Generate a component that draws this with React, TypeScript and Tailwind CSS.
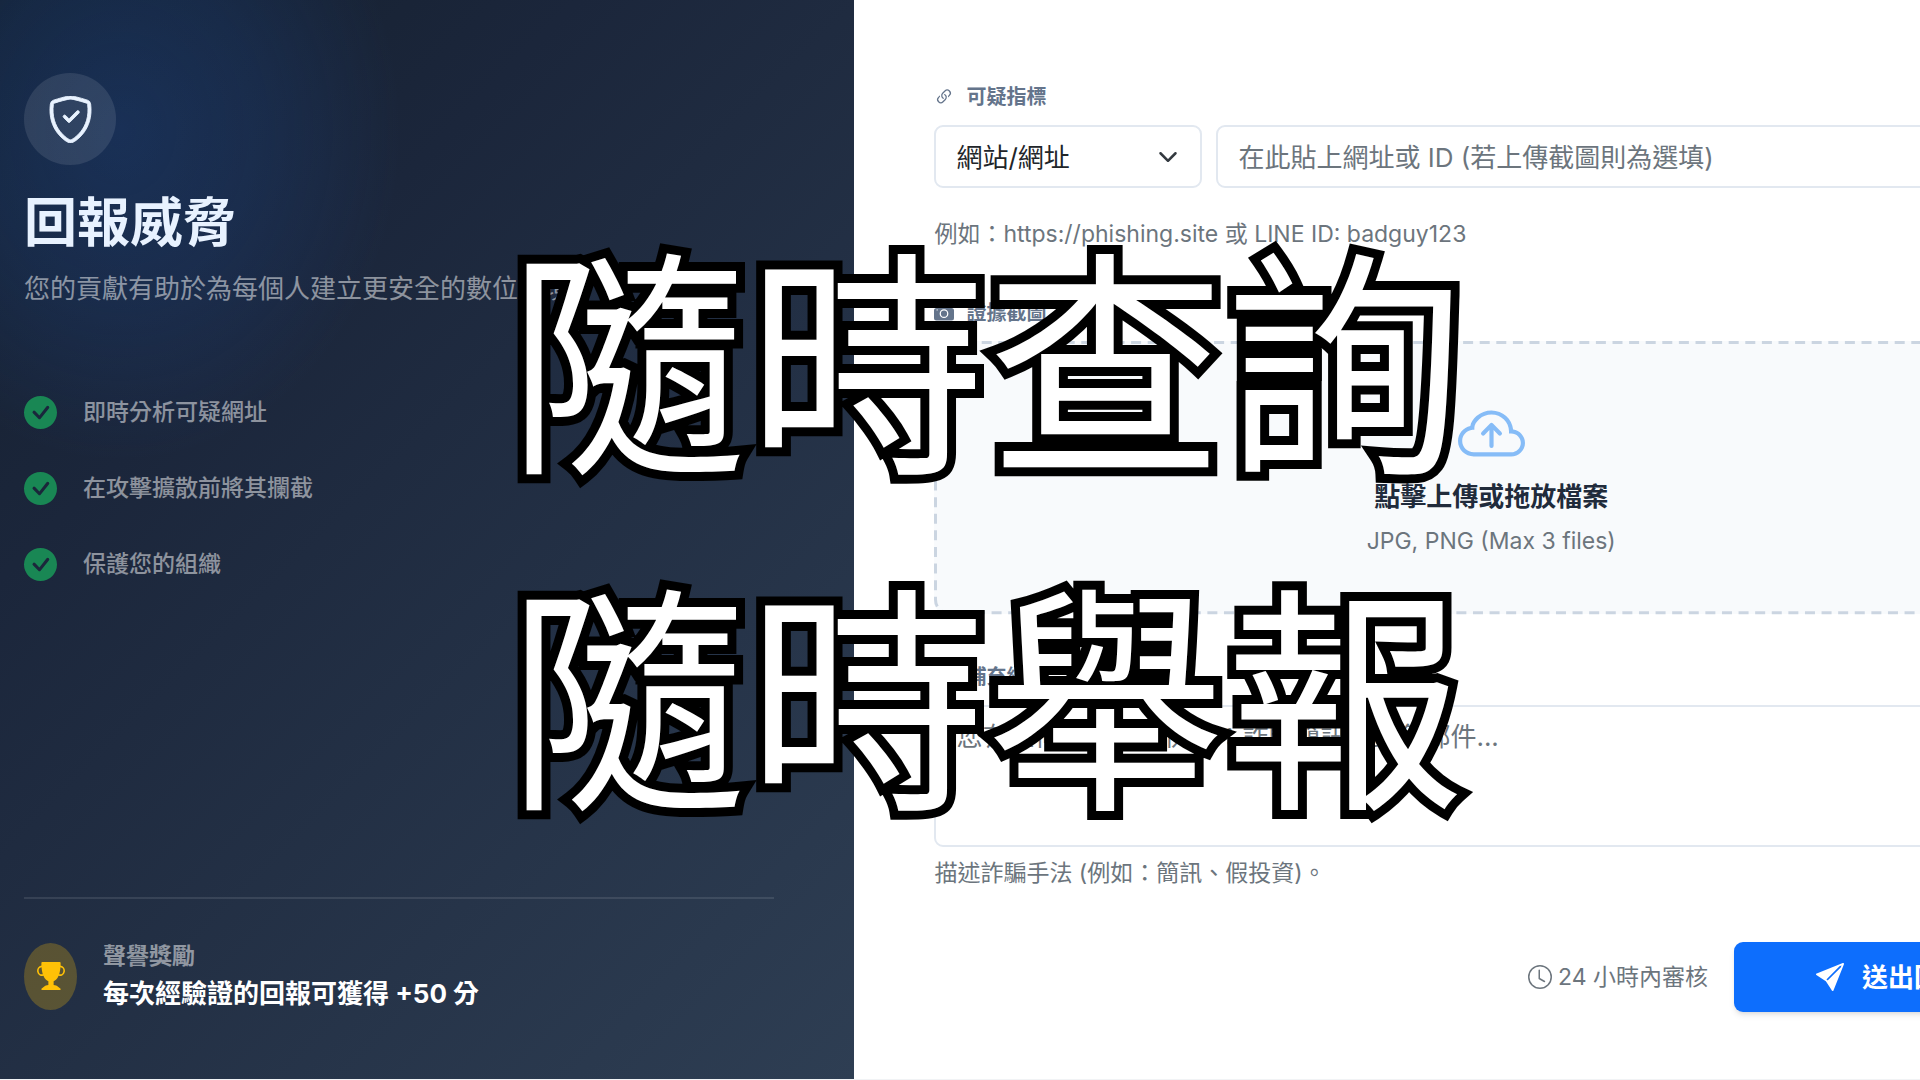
import { useState } from "react"
import {
    BsCameraFill,
    BsCardText,
    BsCheckCircleFill,
    BsChevronDown,
    BsClock,
    BsCloudArrowUp,
    BsLink45Deg,
    BsSendFill,
    BsShieldCheck,
    BsTrophyFill,
} from "react-icons/bs"

const benefits = ["即時分析可疑網址", "在攻擊擴散前將其攔截", "保護您的組織"]

const Sidebar = () => {
    return (
        <aside className="w-[44.5%] shrink-0 flex flex-col pl-6 pr-20 pt-[73px] pb-[65px] bg-[radial-gradient(ellipse_280px_330px_at_120px_130px,rgba(29,78,160,0.32),rgba(29,78,160,0.2)_50%,rgba(29,78,160,0)),linear-gradient(135deg,#141f2d,#1b263b_30%,#2e3e53)]">
            <div className="size-[92px] rounded-full bg-white/10 flex items-center justify-center text-[#e8f2ff]">
                <BsShieldCheck className="size-[47px] stroke-[0.3]" />
            </div>
            <h1 className="mt-[26px] text-[53px] leading-16 font-bold text-[#e8f2ff]">回報威脅</h1>
            <p className="mt-3.5 text-[26px] leading-10 text-white/50 whitespace-nowrap">您的貢獻有助於為每個人建立更安全的數位環境。</p>

            <ul className="mt-[87px] flex flex-col gap-[43px]">
                {benefits.map((benefit, index) => (
                    <li key={index} className="flex items-center gap-[26px] text-[23px] leading-[33px] font-medium text-white/50">
                        <BsCheckCircleFill className="size-[33px] text-[#198754]" />
                        {benefit}
                    </li>
                ))}
            </ul>

            <div className="mt-auto border-t-2 border-white/10 pt-[39px] flex items-center gap-[26px]">
                <div className="w-[53px] h-[67px] rounded-[50%] bg-[#ffc107]/25 flex items-center justify-center">
                    <BsTrophyFill className="size-7 text-[#ffc107]" />
                </div>
                <div>
                    <div className="text-[23px] leading-9 font-bold text-white/50">聲譽獎勵</div>
                    <div className="text-[26px] leading-10 font-bold text-white">每次經驗證的回報可獲得 +50 分</div>
                </div>
            </div>
        </aside>
    )
}

const ReportForm = () => {
    const [report, setReport] = useState({
        kind: "url",
        indicator: "",
        details: "",
    })

    const { kind, indicator, details } = report

    const onChange = (e: any) => setReport({ ...report, [e.target.name]: e.target.value })

    return (
        <form className="-mr-32 pl-20 pt-[81px] pb-[67px] min-h-full flex flex-col" onSubmit={(e) => e.preventDefault()}>
            <label htmlFor="indicator" className="flex items-center gap-3 text-[20px] leading-8 font-bold text-[#64748b]">
                <BsLink45Deg className="size-5" />
                可疑指標
            </label>
            <div className="mt-3 flex gap-3.5">
                <div className="relative w-[268px] shrink-0">
                    <select aria-label="類型" name="kind" value={kind} onChange={onChange} className="appearance-none w-full h-[63px] px-5 pt-0.5 rounded-[9px] border-2 border-[#e2e8f0] bg-white text-[26px] text-[#212529] outline-none">
                        <option value="url">網站/網址</option>
                        <option value="line">LINE ID</option>
                    </select>
                    <BsChevronDown className="absolute right-6 top-[22px] size-5 stroke-1 text-[#343a40] pointer-events-none" />
                </div>
                <input id="indicator" type="text" name="indicator" value={indicator} onChange={onChange} placeholder="在此貼上網址或 ID (若上傳截圖則為選填)" className="grow min-w-0 h-[63px] px-5 pt-0.5 rounded-[9px] border-2 border-[#e2e8f0] text-[26px] text-[#212529] placeholder:text-[#6c757d] outline-none" />
            </div>
            <p className="mt-7 text-[23px] leading-9 text-[#6c757d]">例如：https://phishing.site 或 LINE ID: badguy123</p>

            <label htmlFor="screenshots" className="mt-[45px] flex items-center gap-3 text-[20px] leading-8 font-bold text-[#64748b]">
                <BsCameraFill className="size-5" />
                證據截圖
            </label>
            <label htmlFor="screenshots" className="relative mt-3 h-[273px] shrink-0 flex flex-col items-center pt-[61px] rounded-[13px] bg-[#f8fafc]">
                <svg className="absolute inset-0 size-full overflow-visible" fill="none">
                    <rect x="1.5" y="1.5" width="100%" height="99%" rx="13" stroke="#cbd5e1" strokeWidth="3" strokeDasharray="10 6.6" />
                </svg>
                <BsCloudArrowUp className="size-[67px] text-[#86bcf7]" />
                <span className="mt-2 text-[26px] leading-10 font-bold text-[#212b3b]">點擊上傳或拖放檔案</span>
                <span className="mt-1.5 text-[23px] leading-9 text-[#6c757d]">JPG, PNG (Max 3 files)</span>
                <input id="screenshots" type="file" multiple accept="image/png,image/jpeg" className="sr-only" />
            </label>

            <label htmlFor="details" className="mt-[47px] flex items-center gap-3 text-[20px] leading-8 font-bold text-[#64748b]">
                <BsCardText className="size-5" />
                補充細節
            </label>
            <textarea id="details" name="details" value={details} onChange={onChange} placeholder="您有任何資訊嗎？例如：詐騙簡訊、釣魚郵件..." className="mt-3 h-[142px] shrink-0 px-5 py-2.5 rounded-[9px] border-2 border-[#e2e8f0] resize-none text-[26px] leading-10 text-[#212529] placeholder:text-[#6c757d] outline-none" />
            <p className="mt-2 text-[23px] leading-9 text-[#6c757d]">描述詐騙手法 (例如：簡訊、假投資)。</p>

            <div className="mt-auto flex items-center justify-end gap-[26px]">
                <span className="flex items-center gap-1.5 text-[23px] text-[#6c757d]">
                    <BsClock className="size-6" />
                    24 小時內審核
                </span>
                <button type="submit" className="w-[314px] h-[70px] flex items-center justify-center gap-[18px] rounded-[9px] bg-[#0d6efd] text-[26px] font-bold text-white shadow-md">
                    <BsSendFill className="size-7" />
                    送出回報
                </button>
            </div>
        </form>
    )
}

const App = () => {
    return (
        <div className="relative min-h-screen flex overflow-hidden bg-white border-b border-[#f1f3f5] font-['Inter','Noto_Sans_CJK_TC',sans-serif]">
            <Sidebar />
            <main className="grow min-w-0">
                <ReportForm />
            </main>
            <div className="absolute inset-0 flex flex-col items-center justify-center pl-[52px] pb-[42px] pointer-events-none text-[239px] leading-[336px] font-normal text-white whitespace-nowrap [-webkit-text-stroke:18px_#000] [paint-order:stroke_fill] font-['Noto_Sans_CJK_TC',sans-serif]">
                <div>隨時查詢</div>
                <div>隨時舉報</div>
            </div>
        </div>
    )
}

export default App
